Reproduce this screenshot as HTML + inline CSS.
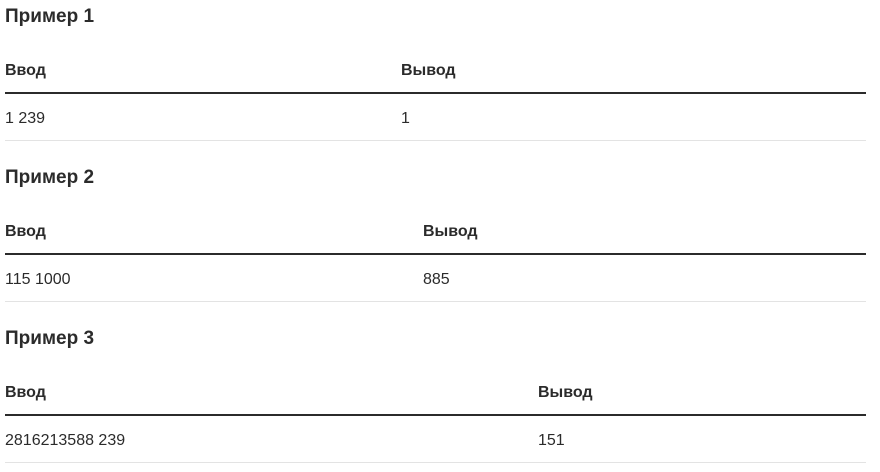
<!DOCTYPE html>
<html><head><meta charset="utf-8"><style>
body{margin:0;width:880px;height:472px;background:#fff;font-family:"Liberation Sans","DejaVu Sans",sans-serif;color:#2b2b2b;position:relative;overflow:hidden}
.a{position:absolute;white-space:nowrap}
.h{font-size:19px;font-weight:bold;left:5px}
.t{font-size:16px}
.b{font-weight:bold}
.d{position:absolute;left:5px;width:861px;height:2px;background:#2b2b2b}
.l{position:absolute;left:5px;width:861px;height:1px;background:#e3e3e3}
</style></head><body>
<div class="a h" style="top:6px">Пример 1</div>
<div class="a t b" style="left:5px;top:62px">Ввод</div>
<div class="a t b" style="left:401px;top:62px">Вывод</div>
<div class="d" style="top:92px"></div>
<div class="a t" style="left:5px;top:110px">1 239</div>
<div class="a t" style="left:401px;top:110px">1</div>
<div class="l" style="top:140px"></div>

<div class="a h" style="top:167px">Пример 2</div>
<div class="a t b" style="left:5px;top:223px">Ввод</div>
<div class="a t b" style="left:423px;top:223px">Вывод</div>
<div class="d" style="top:253px"></div>
<div class="a t" style="left:5px;top:271px">115 1000</div>
<div class="a t" style="left:423px;top:271px">885</div>
<div class="l" style="top:301px"></div>

<div class="a h" style="top:328px">Пример 3</div>
<div class="a t b" style="left:5px;top:384px">Ввод</div>
<div class="a t b" style="left:538px;top:384px">Вывод</div>
<div class="d" style="top:414px"></div>
<div class="a t" style="left:5px;top:432px">2816213588 239</div>
<div class="a t" style="left:538px;top:432px">151</div>
<div class="l" style="top:462px"></div>
</body></html>
